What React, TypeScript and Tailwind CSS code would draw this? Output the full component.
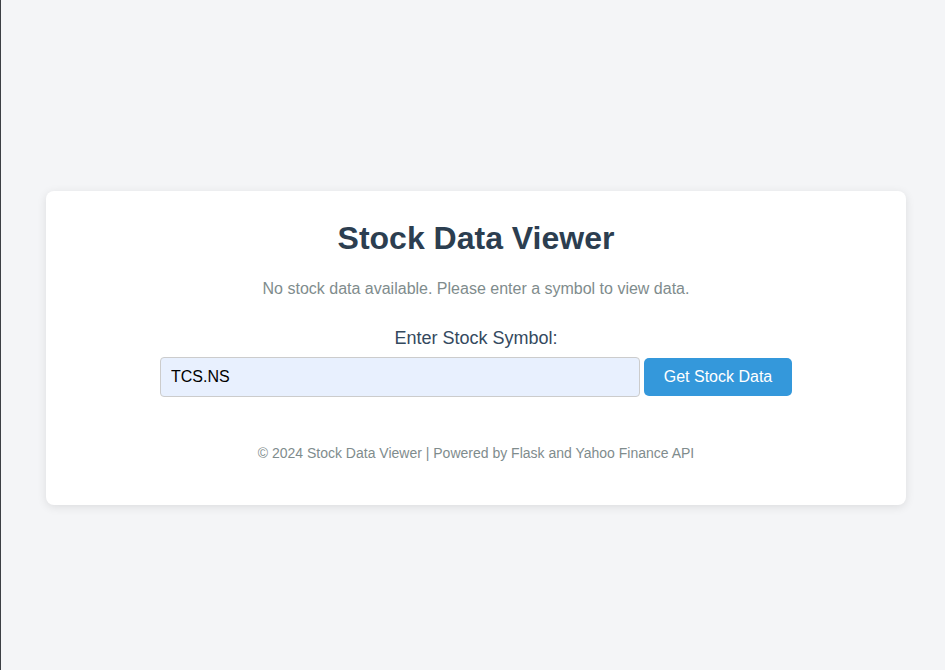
export default function App() {
  return (
    <div
      className="min-h-screen border-l border-[#3c3f44] bg-[#f4f5f7] pl-[45px] pt-[191px]"
      style={{ fontFamily: '"Liberation Sans", Arial, sans-serif' }}
    >
      {/* Card */}
      <div className="w-[860px] rounded-lg bg-white pt-[29px] pb-[44px] text-center shadow-[0_2px_10px_rgba(0,0,0,0.1)]">
        <h1 className="text-[32px] font-bold leading-[37px] text-[#2c3e50]">
          Stock Data Viewer
        </h1>
        <p className="mt-[23px] text-[16px] leading-[18px] text-[#7f8c8d]">
          No stock data available. Please enter a symbol to view data.
        </p>

        <form className="mt-[30px]" onSubmit={(e) => e.preventDefault()}>
          <label className="block text-[18px] leading-[21px] text-[#34495e]">
            Enter Stock Symbol:
          </label>
          <div className="mt-[8px] flex items-center justify-center gap-[4px]">
            <input
              type="text"
              defaultValue="TCS.NS"
              className="h-[40px] w-[480px] rounded border border-[#cccccc] bg-[#e8f0fe] px-[10px] text-[16px] text-black outline-none"
            />
            <button
              type="submit"
              className="h-[38px] w-[148px] rounded-[5px] bg-[#3498db] text-[16px] text-white"
            >
              Get Stock Data
            </button>
          </div>
        </form>

        <footer className="mt-[48px] text-[14px] leading-[16px] text-[#7f8c8d]">
          © 2024 Stock Data Viewer | Powered by Flask and Yahoo Finance API
        </footer>
      </div>
    </div>
  )
}
